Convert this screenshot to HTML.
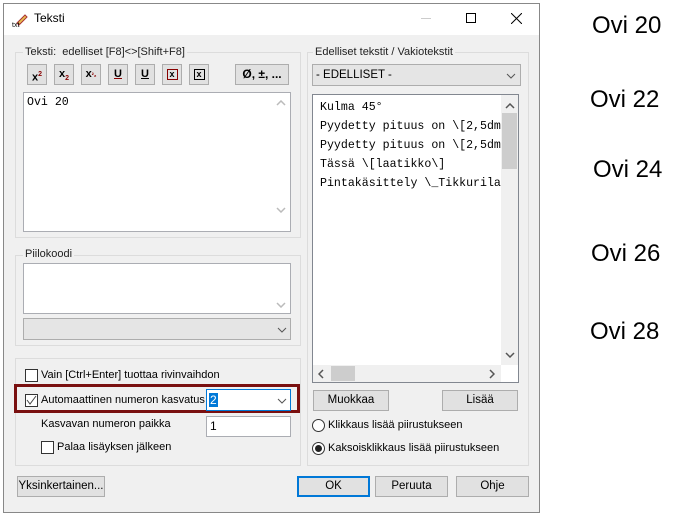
<!DOCTYPE html>
<html><head><meta charset="utf-8"><style>
*{box-sizing:border-box;margin:0;padding:0}
body{width:680px;height:515px;background:#fff;position:relative;overflow:hidden;font-family:"Liberation Sans",sans-serif;font-size:11px;color:#000}
.a{position:absolute}
.win{left:3px;top:3px;width:537px;height:510px;border:1px solid #888;background:#f0f0f0}
.title{left:4px;top:4px;width:535px;height:31px;background:#fff}
.grp{border:1px solid #dcdcdc}
.lbl{background:#f0f0f0;padding:0 2px;font-size:11px;color:#222}
.tb{width:20px;height:21px;border:1px solid #adadad;background:#e1e1e1;font-weight:bold;font-size:11px;text-align:center;line-height:19px}
.ta{background:#fff;border:1px solid #abadb3}
.mono{font-family:"Liberation Mono",monospace;font-size:11.6px}
.btn{border:1px solid #adadad;background:#e1e1e1;text-align:center;line-height:19px;font-size:11.5px}
.cb{width:13px;height:13px;border:1px solid #333;background:#fff}
.combo{border:1px solid #adadad;background:#e5e5e5}
.ovi{font-size:24px;color:#000}
.chev{position:absolute;width:10px;height:6px}
</style></head><body>
<div class="a win"></div>
<div class="a title"></div>
<div class="a" style="left:12px;top:12px;width:16px;height:16px">
<svg width="16" height="16"><path d="M5 11 L13 3 L15 5 L7 13 Z" fill="#e8c050" stroke="#a33" stroke-width="1"/><text x="0" y="15" font-size="7" font-family="Liberation Sans">txt</text></svg></div>
<div class="a" style="left:34px;top:11px;font-size:12px">Teksti</div>
<div class="a" style="left:421px;top:18px;width:10px;height:1px;background:#ccc"></div>
<div class="a" style="left:466px;top:13px;width:10px;height:10px;border:1px solid #000"></div>
<svg class="a" style="left:511px;top:13px" width="11" height="11"><path d="M0 0L11 11M11 0L0 11" stroke="#000" stroke-width="1"/></svg>

<!-- left group -->
<div class="a grp" style="left:15px;top:52px;width:286px;height:186px"></div>
<div class="a lbl" style="left:23px;top:46px">Teksti:&nbsp; edelliset [F8]&lt;&gt;[Shift+F8]</div>
<div class="a tb" style="left:27px;top:64px">x<sup style="font-size:7px;color:#800">2</sup></div>
<div class="a tb" style="left:54px;top:64px">x<sub style="font-size:7px;color:#800">2</sub></div>
<div class="a tb" style="left:81px;top:64px">x<span style="font-size:6px;color:#800">²₂</span></div>
<div class="a tb" style="left:108px;top:64px;text-decoration:underline;text-decoration-color:#800">U</div>
<div class="a tb" style="left:135px;top:64px;text-decoration:underline">U</div>
<div class="a tb" style="left:162px;top:64px"><span style="display:inline-block;width:11px;height:11px;border:1px solid #800;line-height:9px;font-size:9px">x</span></div>
<div class="a tb" style="left:189px;top:64px"><span style="display:inline-block;width:11px;height:11px;border:1px solid #000;line-height:9px;font-size:9px">x</span></div>
<div class="a tb" style="left:235px;top:64px;width:54px;font-size:12px">Ø, ±, ...</div>
<div class="a ta" style="left:23px;top:92px;width:268px;height:140px"></div>
<div class="a mono" style="left:27px;top:96px">Ovi 20</div>
<svg class="chev" style="left:276px;top:100px"><path d="M1 5L5 1L9 5" stroke="#bbb" fill="none" stroke-width="1.5"/></svg>
<svg class="chev" style="left:276px;top:207px"><path d="M1 1L5 5L9 1" stroke="#bbb" fill="none" stroke-width="1.5"/></svg>

<div class="a grp" style="left:15px;top:255px;width:286px;height:91px"></div>
<div class="a lbl" style="left:23px;top:248px">Piilokoodi</div>
<div class="a ta" style="left:23px;top:263px;width:268px;height:51px"></div>
<svg class="chev" style="left:276px;top:302px"><path d="M1 1L5 5L9 1" stroke="#bbb" fill="none" stroke-width="1.5"/></svg>
<div class="a combo" style="left:23px;top:318px;width:268px;height:22px"></div>
<svg class="chev" style="left:277px;top:327px"><path d="M1 1L5 5L9 1" stroke="#555" fill="none"/></svg>

<div class="a grp" style="left:15px;top:358px;width:286px;height:108px"></div>
<div class="a cb" style="left:25px;top:369px"></div>
<div class="a" style="left:41px;top:369px">Vain [Ctrl+Enter] tuottaa rivinvaihdon</div>
<div class="a" style="left:14px;top:384px;width:286px;height:29px;border:3px solid #7a1010"></div>
<div class="a cb" style="left:25px;top:394px"><svg width="11" height="11" style="position:absolute;left:0;top:0"><path d="M1 5L4 9L10 1" stroke="#444" fill="none"/></svg></div>
<div class="a" style="left:41px;top:394px">Automaattinen numeron kasvatus</div>
<div class="a" style="left:206px;top:389px;width:85px;height:22px;border:1px solid #0078d7;background:#fff"></div>
<div class="a" style="left:209px;top:393px;background:#0078d7;color:#fff;padding:0 1px;line-height:14px;font-size:12px">2</div>
<svg class="chev" style="left:277px;top:398px"><path d="M1 1L5 5L9 1" stroke="#555" fill="none"/></svg>
<div class="a" style="left:41px;top:418px">Kasvavan numeron paikka</div>
<div class="a" style="left:206px;top:416px;width:85px;height:21px;border:1px solid #abadb3;background:#fff;padding:2px 3px;font-size:12px">1</div>
<div class="a cb" style="left:41px;top:441px"></div>
<div class="a" style="left:57px;top:441px">Palaa lisäyksen jälkeen</div>
<div class="a btn" style="left:17px;top:476px;width:88px;height:21px">Yksinkertainen...</div>

<!-- right group -->
<div class="a grp" style="left:307px;top:52px;width:222px;height:414px"></div>
<div class="a lbl" style="left:313px;top:46px">Edelliset tekstit / Vakiotekstit</div>
<div class="a combo" style="left:312px;top:64px;width:209px;height:22px;padding:4px 3px;font-size:11.5px">- EDELLISET -</div>
<svg class="chev" style="left:506px;top:73px"><path d="M1 1L5 5L9 1" stroke="#555" fill="none"/></svg>
<div class="a ta" style="left:312px;top:94px;width:207px;height:289px;border-color:#828790"></div>
<div class="a mono" style="left:320px;top:98px;line-height:19px;white-space:pre;width:181px;overflow:hidden">Kulma 45°
Pyydetty pituus on \[2,5dm
Pyydetty pituus on \[2,5dm
Tässä \[laatikko\]
Pintakäsittely \_Tikkurila</div>
<div class="a" style="left:501px;top:95px;width:17px;height:270px;background:#f0f0f0"></div>
<div class="a" style="left:502px;top:113px;width:15px;height:56px;background:#cdcdcd"></div>
<svg class="chev" style="left:505px;top:103px"><path d="M1 5L5 1L9 5" stroke="#555" fill="none" stroke-width="1.5"/></svg>
<svg class="chev" style="left:505px;top:352px"><path d="M1 1L5 5L9 1" stroke="#555" fill="none" stroke-width="1.5"/></svg>
<div class="a" style="left:313px;top:365px;width:188px;height:17px;background:#f0f0f0"></div>
<div class="a" style="left:331px;top:366px;width:24px;height:15px;background:#cdcdcd"></div>
<svg class="a" style="left:318px;top:369px" width="6" height="10"><path d="M5 1L1 5L5 9" stroke="#555" fill="none" stroke-width="1.5"/></svg>
<svg class="a" style="left:489px;top:369px" width="6" height="10"><path d="M1 1L5 5L1 9" stroke="#555" fill="none" stroke-width="1.5"/></svg>
<div class="a btn" style="left:313px;top:390px;width:76px;height:21px">Muokkaa</div>
<div class="a btn" style="left:442px;top:390px;width:76px;height:21px">Lisää</div>
<div class="a" style="left:312px;top:419px;width:13px;height:13px;border:1px solid #333;border-radius:50%;background:#fff"></div>
<div class="a" style="left:328px;top:419px">Klikkaus lisää piirustukseen</div>
<div class="a" style="left:312px;top:442px;width:13px;height:13px;border:1px solid #333;border-radius:50%;background:#fff"><div style="margin:2px;width:7px;height:7px;border-radius:50%;background:#222"></div></div>
<div class="a" style="left:328px;top:442px">Kaksoisklikkaus lisää piirustukseen</div>

<div class="a btn" style="left:297px;top:476px;width:73px;height:21px;border:2px solid #0078d7;line-height:17px">OK</div>
<div class="a btn" style="left:375px;top:476px;width:73px;height:21px">Peruuta</div>
<div class="a btn" style="left:456px;top:476px;width:73px;height:21px">Ohje</div>

<div class="a ovi" style="left:592px;top:12px">Ovi 20</div>
<div class="a ovi" style="left:590px;top:86px">Ovi 22</div>
<div class="a ovi" style="left:593px;top:156px">Ovi 24</div>
<div class="a ovi" style="left:591px;top:240px">Ovi 26</div>
<div class="a ovi" style="left:590px;top:318px">Ovi 28</div>
</body></html>
